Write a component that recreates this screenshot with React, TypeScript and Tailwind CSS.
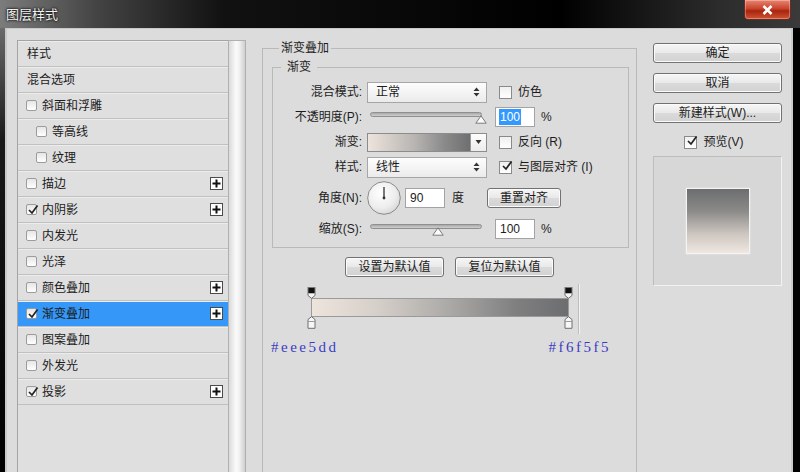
import React from 'react';

type Layer = {
  name: string;
  head?: boolean;
  indent?: boolean;
  checked?: boolean;
  plus?: boolean;
  active?: boolean;
};

const layers: Layer[] = [
  { name: '样式', head: true },
  { name: '混合选项', head: true },
  { name: '斜面和浮雕' },
  { name: '等高线', indent: true },
  { name: '纹理', indent: true },
  { name: '描边', plus: true },
  { name: '内阴影', checked: true, plus: true },
  { name: '内发光' },
  { name: '光泽' },
  { name: '颜色叠加', plus: true },
  { name: '渐变叠加', checked: true, plus: true, active: true },
  { name: '图案叠加' },
  { name: '外发光' },
  { name: '投影', checked: true, plus: true },
];

const Check = ({ className = '' }: { className?: string }) => (
  <svg width="12" height="12" viewBox="0 0 12 12" className={className}>
    <path d="M2 6 L5 9 L10.5 1.5" fill="none" stroke="#222" strokeWidth="1.7" />
  </svg>
);

const SmallBox = ({ checked }: { checked?: boolean }) => (
  <span className="relative w-[11px] h-[11px] shrink-0 rounded-[2px] border border-[#9c9c9c] bg-[linear-gradient(#e6e6e6,#ffffff)] flex items-center justify-center">
    {checked && <Check className="absolute -top-[1px] left-0" />}
  </span>
);

const FormBox = ({ checked }: { checked?: boolean }) => (
  <span className="relative w-[13px] h-[13px] shrink-0 border border-[#8a8a8a] bg-[linear-gradient(#f0f0f0,#ffffff)] flex items-center justify-center">
    {checked && <Check className="absolute -top-[2px] left-[1px]" />}
  </span>
);

const PlusBox = () => (
  <span className="w-[13px] h-[13px] shrink-0 border border-[#4a4a4a] bg-white flex items-center justify-center">
    <svg width="9" height="9" viewBox="0 0 9 9">
      <path d="M4.5 0.5 V8.5 M0.5 4.5 H8.5" stroke="#111" strokeWidth="2" />
    </svg>
  </span>
);

const LayerRow = ({ item }: { item: Layer }) => {
  const pad = item.head ? 'pl-[9px]' : item.indent ? 'pl-[18px]' : 'pl-[8px]';
  return (
    <div
      className={`h-[26px] flex items-center pr-[5px] border-b border-[#c0c0c0] shadow-[inset_0_1px_0_#ececec] ${pad} ${
        item.active ? 'bg-[#3597f7]' : 'bg-[#dfdfdf]'
      }`}
    >
      {!item.head && <SmallBox checked={item.checked} />}
      <span className={`flex-1 leading-none ${item.head ? '' : 'ml-[5px]'}`}>{item.name}</span>
      {item.plus && <PlusBox />}
    </div>
  );
};

const Btn = ({ children, className = '' }: { children: React.ReactNode; className?: string }) => (
  <div
    className={`h-[20px] flex items-center justify-center rounded-[3px] border border-[#727272] bg-[linear-gradient(#f6f6f6,#e9e9e9_48%,#dadada_52%,#d2d2d2)] shadow-[inset_0_0_0_1px_#fbfbfb] leading-none ${className}`}
  >
    {children}
  </div>
);

const UpDown = () => (
  <svg width="7" height="10" viewBox="0 0 7 10">
    <path d="M3.5 0.5 L6.5 4 H0.5 Z M3.5 9.5 L6.5 6 H0.5 Z" fill="#333" />
  </svg>
);

const Select = ({ value }: { value: string }) => (
  <div className="w-[120px] h-[21px] shrink-0 border border-[#a6a6a6] bg-[linear-gradient(#fdfdfd,#ebebeb)] flex items-center justify-between pl-[8px] pr-[6px] leading-none">
    <span>{value}</span>
    <UpDown />
  </div>
);

const Slider = ({ thumb }: { thumb: string }) => (
  <div className="relative w-[120px] h-[22px] shrink-0">
    <div className="absolute left-[3px] right-[5px] top-[6px] h-[5px] rounded-[3px] border border-[#8f8f8f] bg-[linear-gradient(#a9a9a9,#cfcfcf)]" />
    <svg width="12" height="9" viewBox="0 0 12 9" className={`absolute top-[9px] ${thumb}`}>
      <path d="M6 0.8 L11.2 8.2 H0.8 Z" fill="#fbfbfb" stroke="#7a7a7a" strokeWidth="1" strokeLinejoin="round" />
    </svg>
  </div>
);

const Field = ({ children, className = '' }: { children: React.ReactNode; className?: string }) => (
  <div className={`w-[40px] h-[20px] shrink-0 border border-[#a3a3a3] bg-white flex items-center pl-[3px] leading-none ${className}`}>
    {children}
  </div>
);

const Label = ({ children }: { children: React.ReactNode }) => (
  <span className="w-[94px] shrink-0 pr-[5px] text-right leading-none">{children}</span>
);

const TopStop = () => (
  <svg width="9" height="12" viewBox="0 0 9 12">
    <rect x="1" y="0.5" width="7" height="6" fill="#111" stroke="#777" />
    <path d="M1 6.5 V8.5 L4.5 11.3 L8 8.5 V6.5" fill="#f4f4f4" stroke="#6e6e6e" />
  </svg>
);

const BottomStop = () => (
  <svg width="9" height="13" viewBox="0 0 9 13">
    <path d="M4.5 0.7 L8 3.5 V12.3 H1 V3.5 Z" fill="#f7f7f7" stroke="#6e6e6e" />
    <path d="M1 5.5 H8" stroke="#9a9a9a" />
  </svg>
);

export default function App() {
  return (
    <div className="w-[800px] h-[472px] overflow-hidden bg-black flex flex-col font-['Liberation_Sans','Noto_Sans_CJK_SC',sans-serif] text-[12px] text-[#1c1c1c]">
      {/* title bar */}
      <div className="h-[28px] shrink-0 flex items-start justify-between bg-[linear-gradient(90deg,#7c7c7c_0%,#444_12%,#111_28%,#000_70%,#2c2c2c_90%,#3a3a3a_100%)]">
        <span className="mt-[7px] ml-[6px] text-[13px] leading-[15px] text-[#f2f2f2] [text-shadow:0_0_3px_#000,0_0_2px_#000]">
          图层样式
        </span>
        <div className="mr-[9px] w-[47px] h-[20px] rounded-b-[4px] border border-t-0 border-[#6d2a20] bg-[linear-gradient(#e98670,#c8442d_45%,#a9240f_58%,#cf5533)] shadow-[inset_0_0_0_1px_rgba(255,255,255,0.3)] flex items-center justify-center">
          <svg width="11" height="10" viewBox="0 0 11 10">
            <path d="M1.5 1 L9.5 9 M9.5 1 L1.5 9" stroke="#fff" strokeWidth="2.6" />
          </svg>
        </div>
      </div>

      <div className="flex-1 flex min-h-0">
        <div className="w-[5px] shrink-0 bg-[linear-gradient(#6a6a6a,#1a1a1a_25%,#000)]" />
        <div className="flex-1 flex min-h-0 border-l-2 border-r-2 border-t border-[#c9c9c9] bg-[#dcdcdc] pl-[10px] pt-[11px]">
          {/* layer list */}
          <div className="w-[229px] shrink-0 flex">
            <div className="w-[211px] border-l border-t border-[#a4a4a4] bg-[#dfdfdf] flex flex-col">
              {layers.map((item) => (
                <LayerRow key={item.name} item={item} />
              ))}
            </div>
            <div className="w-[18px] border-t border-r border-l border-[#b0b0b0] bg-[linear-gradient(90deg,#dadada,#fbfbfb_45%,#f0f0f0_65%,#cfcfcf)]" />
          </div>

          {/* settings */}
          <div className="w-[391px] shrink-0 pl-[16px]">
            <fieldset className="w-[375px] h-[450px] border border-[#b9b9b9]">
              <legend className="ml-[16px] px-[2px] leading-[16px]">渐变叠加</legend>
              <fieldset className="mt-[3px] ml-[9px] w-[357px] border border-[#b9b9b9] pt-[6px] pb-[7px]">
                <legend className="ml-[8px] px-[6px] leading-[16px]">渐变</legend>
                <div className="flex flex-col gap-[3px]">
                  <div className="h-[22px] flex items-center">
                    <Label>混合模式:</Label>
                    <Select value="正常" />
                    <span className="ml-[12px] flex items-center">
                      <FormBox />
                      <span className="ml-[6px] leading-none">仿色</span>
                    </span>
                  </div>
                  <div className="h-[22px] flex items-center">
                    <Label>不透明度(P):</Label>
                    <Slider thumb="left-[108px]" />
                    <Field className="ml-[8px] border-[#6fa7d8]">
                      <span className="bg-[#3399ff] text-white px-[1px] py-[2px]">100</span>
                    </Field>
                    <span className="ml-[6px] leading-none">%</span>
                  </div>
                  <div className="h-[22px] flex items-center">
                    <Label>渐变:</Label>
                    <div className="w-[120px] h-[19px] shrink-0 border border-[#8c8c8c] flex">
                      <div className="flex-1 bg-[linear-gradient(90deg,#ede4dc,#b9b5b2_45%,#8a8a8a_75%,#6e6f71)]" />
                      <div className="w-[16px] border-l border-[#9a9a9a] bg-[linear-gradient(#fdfdfd,#ececec)] flex items-center justify-center">
                        <svg width="7" height="4" viewBox="0 0 7 4">
                          <path d="M0.5 0 H6.5 L3.5 4 Z" fill="#333" />
                        </svg>
                      </div>
                    </div>
                    <span className="ml-[12px] flex items-center">
                      <FormBox />
                      <span className="ml-[6px] leading-none">反向 (R)</span>
                    </span>
                  </div>
                  <div className="h-[22px] flex items-center">
                    <Label>样式:</Label>
                    <Select value="线性" />
                    <span className="ml-[12px] flex items-center">
                      <FormBox checked />
                      <span className="ml-[6px] leading-none">与图层对齐 (I)</span>
                    </span>
                  </div>
                  <div className="h-[34px] flex items-center">
                    <Label>角度(N):</Label>
                    <svg width="34" height="34" viewBox="0 0 34 34" className="shrink-0">
                      <defs>
                        <radialGradient id="dial" cx="40%" cy="35%" r="70%">
                          <stop offset="0%" stopColor="#ffffff" />
                          <stop offset="65%" stopColor="#ededed" />
                          <stop offset="100%" stopColor="#d6d6d6" />
                        </radialGradient>
                      </defs>
                      <circle cx="17" cy="17" r="16.3" fill="url(#dial)" stroke="#8a8a8a" />
                      <path d="M17 17 V6" stroke="#333" strokeWidth="1.3" />
                      <circle cx="17" cy="17" r="1.4" fill="#333" />
                    </svg>
                    <Field className="ml-[4px]">
                      <span className="pl-[1px]">90</span>
                    </Field>
                    <span className="ml-[7px] leading-none">度</span>
                    <Btn className="ml-[23px] w-[74px] h-[19px]">重置对齐</Btn>
                  </div>
                  <div className="h-[22px] flex items-center">
                    <Label>缩放(S):</Label>
                    <Slider thumb="left-[65px]" />
                    <Field className="ml-[8px]">
                      <span className="pl-[1px]">100</span>
                    </Field>
                    <span className="ml-[6px] leading-none">%</span>
                  </div>
                </div>
              </fieldset>

              <div className="mt-[9px] flex justify-center gap-[11px]">
                <Btn className="w-[99px] h-[19px]">设置为默认值</Btn>
                <Btn className="w-[99px] h-[19px]">复位为默认值</Btn>
              </div>

              <div className="mt-[7px] ml-[48px] flex">
                <div className="relative w-[258px] h-[50px]">
                  <div className="absolute left-0 right-0 top-[14px] h-[19px] border border-[#9a9a9a] bg-[linear-gradient(90deg,#ede4dc,#d6d0ca_25%,#a9a7a5_55%,#7f7f80_80%,#6c6d6f)]" />
                  <div className="absolute -left-[4px] top-[3px]">
                    <TopStop />
                  </div>
                  <div className="absolute -right-[4px] top-[3px]">
                    <TopStop />
                  </div>
                  <div className="absolute -left-[4px] top-[32px]">
                    <BottomStop />
                  </div>
                  <div className="absolute -right-[4px] top-[32px]">
                    <BottomStop />
                  </div>
                </div>
                <div className="ml-[9px] w-[2px] h-[50px] border-l border-[#bdbdbd] bg-[#f3f3f3]" />
              </div>

              <div className="mt-[5px] pl-[8px] pr-[25px] flex justify-between font-['Liberation_Serif',serif] text-[15px] leading-[17px] tracking-[2.5px] text-[#3b3bc4]">
                <span>#eee5dd</span>
                <span>#f6f5f5</span>
              </div>
            </fieldset>
          </div>

          {/* right column */}
          <div className="pl-[16px] w-[145px] shrink-0 pt-[3px] flex flex-col">
            <Btn className="border-[#3a3a3a] shadow-[inset_0_0_0_1px_#9c9c9c]">确定</Btn>
            <Btn className="mt-[10px]">取消</Btn>
            <Btn className="mt-[10px]">新建样式(W)...</Btn>
            <div className="mt-[12px] h-[14px] pr-[8px] flex items-center justify-center">
              <FormBox checked />
              <span className="ml-[7px] leading-none">预览(V)</span>
            </div>
            <div className="mt-[7px] w-[129px] h-[130px] border border-t-[#bdbdbd] border-l-[#bdbdbd] border-r-[#f2f2f2] border-b-[#f2f2f2] bg-[#d7d7d7] flex items-center justify-center">
              <div className="w-[64px] h-[66px] border border-[#f4f4f4] shadow-[0_0_2px_#eaeaea] bg-[linear-gradient(#6c6d6f,#8c8b8a_35%,#cdc6c0_70%,#efe7e0)]" />
            </div>
          </div>
        </div>
        <div className="w-[7px] shrink-0 bg-black" />
      </div>
    </div>
  );
}
